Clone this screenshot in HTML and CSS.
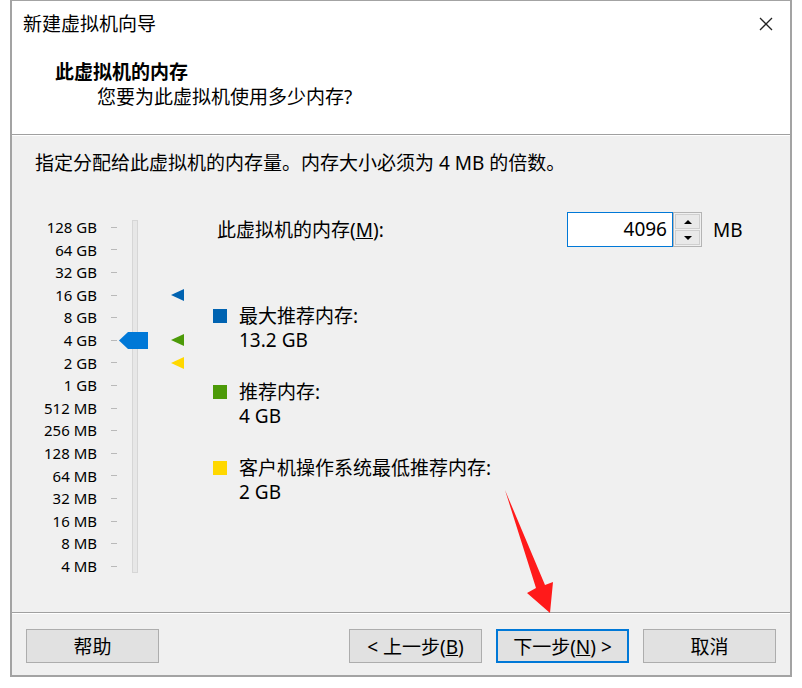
FILE: index.html
```html
<!DOCTYPE html>
<html lang="zh-CN">
<head>
    <meta charset="UTF-8">
    <title>新建虚拟机向导</title>
    <link rel="stylesheet" href="styles.css">
</head>
<body>

    <div class="window">
        <div class="titlebar">
            <span class="title">新建虚拟机向导</span>
            <svg class="close-icon" width="14" height="14" viewBox="0 0 14 14">
                <path d="M1 1 L13 13 M13 1 L1 13" stroke="#222" stroke-width="1.3" fill="none"/>
            </svg>
        </div>

        <div class="header">
            <div class="header-title">此虚拟机的内存</div>
            <div class="header-sub">您要为此虚拟机使用多少内存?</div>
        </div>

        <div class="content">
            <p class="intro">指定分配给此虚拟机的内存量。内存大小必须为 4 MB 的倍数。</p>

            <div class="main">
                <!-- memory slider -->
                <div class="slider">
                    <div class="track"></div>
                    <svg class="thumb" width="29" height="17" viewBox="0 0 29 17">
                        <polygon points="0,8.5 9,0 29,0 29,17 9,17" fill="#0078d7"/>
                    </svg>
                    <span class="marker marker-max"></span>
                    <span class="marker marker-rec"></span>
                    <span class="marker marker-min"></span>

                    <span class="tick-label">128 GB</span><span class="tick"></span>
                    <span class="tick-label">64 GB</span><span class="tick"></span>
                    <span class="tick-label">32 GB</span><span class="tick"></span>
                    <span class="tick-label">16 GB</span><span class="tick"></span>
                    <span class="tick-label">8 GB</span><span class="tick"></span>
                    <span class="tick-label">4 GB</span><span class="tick"></span>
                    <span class="tick-label">2 GB</span><span class="tick"></span>
                    <span class="tick-label">1 GB</span><span class="tick"></span>
                    <span class="tick-label">512 MB</span><span class="tick"></span>
                    <span class="tick-label">256 MB</span><span class="tick"></span>
                    <span class="tick-label">128 MB</span><span class="tick"></span>
                    <span class="tick-label">64 MB</span><span class="tick"></span>
                    <span class="tick-label">32 MB</span><span class="tick"></span>
                    <span class="tick-label">16 MB</span><span class="tick"></span>
                    <span class="tick-label">8 MB</span><span class="tick"></span>
                    <span class="tick-label">4 MB</span><span class="tick"></span>
                </div>

                <div class="details">
                    <div class="memory-row">
                        <span class="memory-label">此虚拟机的内存(<u>M</u>):</span>
                        <div class="mem-input">4096</div>
                        <div class="spinner">
                            <div class="spin-btn"><span class="arrow-up"></span></div>
                            <div class="spin-btn"><span class="arrow-down"></span></div>
                        </div>
                        <span class="unit">MB</span>
                    </div>

                    <div class="legend">
                        <div class="legend-item">
                            <span class="swatch swatch-max"></span>
                            <span>最大推荐内存:</span>
                            <span class="legend-value">13.2 GB</span>
                        </div>
                        <div class="legend-item">
                            <span class="swatch swatch-rec"></span>
                            <span>推荐内存:</span>
                            <span class="legend-value">4 GB</span>
                        </div>
                        <div class="legend-item">
                            <span class="swatch swatch-min"></span>
                            <span>客户机操作系统最低推荐内存:</span>
                            <span class="legend-value">2 GB</span>
                        </div>
                    </div>
                </div>
            </div>
        </div>

        <div class="footer">
            <button class="btn">帮助</button>
            <div class="spacer"></div>
            <button class="btn">&lt; 上一步(<u>B</u>)</button>
            <button class="btn btn-default">下一步(<u>N</u>) &gt;</button>
            <button class="btn">取消</button>
        </div>
    </div>

    <!-- red annotation arrow drawn over the dialog -->
    <svg class="annotation" width="802" height="688" viewBox="0 0 802 688">
        <polygon points="505,490 545,585 553,582 550,613 527,593 536,588" fill="#ff1a1a"/>
    </svg>

</body>
</html>
```

FILE: styles.css
```css
body {
    margin: 0;
    background-color: #ffffff;
    font-family: "Noto Sans", "Noto Sans CJK SC", sans-serif;
    font-size: 19px;
    line-height: 24px;
    color: #000000;
}

.window {
    margin-left: 10px;
    width: 778px;
    height: 674px;
    border: 2px solid #a3a3a3;
    border-top-width: 1px;
    display: flex;
    flex-direction: column;
    background-color: #f0f0f0;
}

.titlebar {
    height: 45px;
    background-color: #ffffff;
    display: flex;
    align-items: center;
    justify-content: space-between;
    padding: 0 17px 0 11px;
}

.close-icon {
    display: block;
}

.header {
    height: 89px;
    box-sizing: border-box;
    padding-top: 14px;
    background-color: #ffffff;
    border-bottom: 1px solid #a0a0a0;
}

.header-title {
    font-weight: bold;
    padding-left: 43px;
}

.header-sub {
    padding-left: 85px;
    margin-top: 1px;
}

.content {
    flex: 1;
    border-top: 1px solid #ffffff;
    padding: 15px 0 0 10px;
}

.intro {
    margin: 0 0 0 13px;
}

.main {
    display: flex;
    margin-top: 37px;
}

/* slider */
.slider {
    display: grid;
    grid-template-columns: 75px 20px 33px 34px;
    grid-template-rows: repeat(16, 22.6px);
    margin-top: 4px;
}

.tick-label {
    grid-column: 1;
    text-align: right;
    font-size: 15px;
    line-height: 22.6px;
    white-space: nowrap;
}

.tick {
    grid-column: 2;
    justify-self: end;
    align-self: center;
    width: 6px;
    height: 1px;
    background-color: #b9b9b9;
}

.track {
    grid-column: 3;
    grid-row: 1 / -1;
    justify-self: start;
    width: 6px;
    margin: 4px 0 5px 15px;
    box-sizing: border-box;
    border: 1px solid #d6d6d6;
    background-color: #e7e7e7;
}

.thumb {
    grid-column: 3;
    grid-row: 6;
    justify-self: start;
    align-self: center;
    margin-left: 2px;
    display: block;
}

.marker {
    grid-column: 4;
    justify-self: end;
    align-self: center;
    width: 0;
    height: 0;
    border-top: 6px solid transparent;
    border-bottom: 6px solid transparent;
    border-right: 13px solid;
}

.marker-max {
    grid-row: 4;
    border-right-color: #0063b1;
}

.marker-rec {
    grid-row: 6;
    border-right-color: #4c9a08;
}

.marker-min {
    grid-row: 7;
    border-right-color: #ffd800;
}

/* right side */
.details {
    margin-left: 29px;
}

.memory-row {
    display: flex;
    align-items: center;
    height: 35px;
}

.memory-label {
    width: 350px;
    margin-left: 4px;
}

.mem-input {
    width: 106px;
    height: 35px;
    box-sizing: border-box;
    border: 1px solid #0078d7;
    background-color: #ffffff;
    text-align: right;
    padding-right: 5px;
    line-height: 33px;
    font-size: 19px;
}

.spinner {
    width: 29px;
    height: 35px;
    box-sizing: border-box;
    border: 1px solid #b4b4b4;
    background-color: #f0f0f0;
    display: flex;
    flex-direction: column;
    padding: 1px;
    gap: 1px;
}

.spin-btn {
    flex: 1;
    border: 1px solid #cfcfcf;
    background-color: #e9e9e9;
    display: flex;
    align-items: center;
    justify-content: center;
}

.arrow-up {
    width: 0;
    height: 0;
    border-left: 4px solid transparent;
    border-right: 4px solid transparent;
    border-bottom: 4px solid #000000;
}

.arrow-down {
    width: 0;
    height: 0;
    border-left: 4px solid transparent;
    border-right: 4px solid transparent;
    border-top: 4px solid #000000;
}

.unit {
    margin-left: 11px;
}

.legend {
    margin-top: 57px;
    display: flex;
    flex-direction: column;
    gap: 28px;
}

.legend-item {
    display: grid;
    grid-template-columns: 14px auto;
    column-gap: 12px;
}

.swatch {
    grid-row: 1;
    width: 14px;
    height: 14px;
    align-self: center;
}

.legend-value {
    grid-column: 2;
}

.swatch-max {
    background-color: #0063b1;
}

.swatch-rec {
    background-color: #4c9a08;
}

.swatch-min {
    background-color: #ffd800;
}

/* footer buttons */
.footer {
    height: 63px;
    box-sizing: border-box;
    border-top: 1px solid #a0a0a0;
    box-shadow: inset 0 1px 0 #ffffff;
    padding: 16px 14px 0 14px;
    display: flex;
    align-items: flex-start;
    gap: 14px;
}

.spacer {
    flex: 1;
}

.btn {
    width: 133px;
    height: 34px;
    box-sizing: border-box;
    border: 1px solid #adadad;
    background-color: #e1e1e1;
    font-family: inherit;
    font-size: 19px;
    color: #000000;
    padding: 0;
}

.btn-default {
    border: 2px solid #0078d7;
}

.annotation {
    position: absolute;
    top: 0;
    left: 0;
    pointer-events: none;
}
```
